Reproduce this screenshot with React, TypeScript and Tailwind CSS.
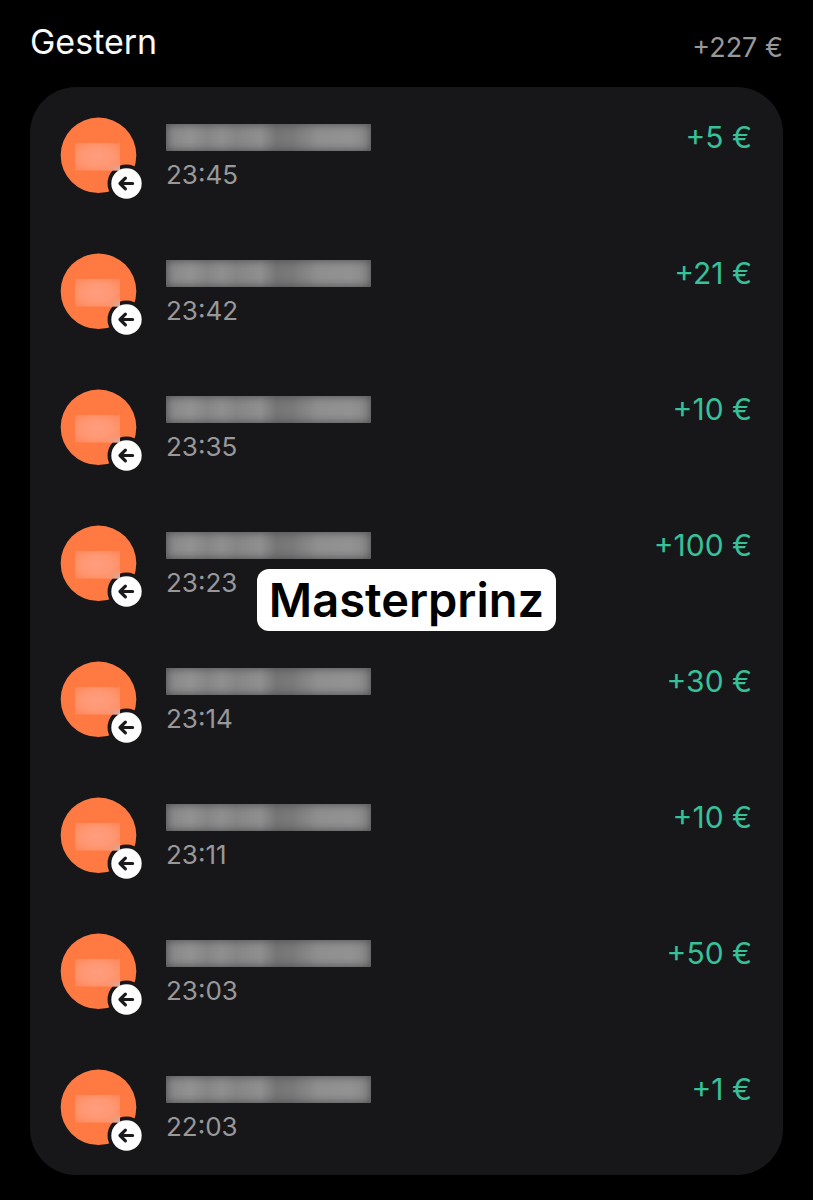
type Transaction = {
  time: string;
  amount: string;
};

const transactions: Transaction[] = [
  { time: '23:45', amount: '+5 €' },
  { time: '23:42', amount: '+21 €' },
  { time: '23:35', amount: '+10 €' },
  { time: '23:23', amount: '+100 €' },
  { time: '23:14', amount: '+30 €' },
  { time: '23:11', amount: '+10 €' },
  { time: '23:03', amount: '+50 €' },
  { time: '22:03', amount: '+1 €' },
];

function Avatar() {
  return (
    <svg
      className="h-[82px] w-[82px] shrink-0"
      viewBox="0 0 82 82"
      fill="none"
      aria-hidden="true"
    >
      <defs>
        <radialGradient id="initials" cx="0.5" cy="0.5" r="0.68">
          <stop offset="0" stopColor="#ff9d7e" />
          <stop offset="0.5" stopColor="#ff9874" />
          <stop offset="1" stopColor="#ff875a" />
        </radialGradient>
        <radialGradient id="corner" cx="1" cy="1" r="0.4">
          <stop offset="0" stopColor="#c9b4b6" />
          <stop offset="0.4" stopColor="#dfa594" stopOpacity="0.6" />
          <stop offset="1" stopColor="#ff9670" stopOpacity="0" />
        </radialGradient>
      </defs>
      <circle cx="38.5" cy="38.3" r="37.8" fill="#ff7a43" />
      <circle cx="66.5" cy="66.5" r="19" fill="#171719" />
      <rect x="15" y="26" width="45" height="27.5" fill="url(#initials)" />
      <rect x="15" y="26" width="45" height="27.5" fill="url(#corner)" />
      <circle cx="66.5" cy="66.5" r="15.2" fill="#ffffff" />
      <path
        d="M72.6 66.5H60.5M65.4 61.1L60 66.5L65.4 71.9"
        stroke="#1b1b1d"
        strokeWidth="3.2"
        strokeLinecap="round"
        strokeLinejoin="round"
      />
    </svg>
  );
}

function HiddenName() {
  return (
    <div className="h-[27px] w-[205px] bg-[linear-gradient(90deg,#868687_0%,#929293_12%,#868687_20%,#8f8f90_27%,#868687_34%,#8f8f90_46%,#757576_54%,#7a7a7b_62%,#8f8f90_74%,#929293_90%,#868687_100%)] shadow-[inset_0_0_10px_#48484a]" />
  );
}

function TransactionRow({ time, amount }: Transaction) {
  return (
    <li className="flex h-[136px] items-start pt-[30px] pr-[31px] pl-[30px]">
      <Avatar />
      <div className="ml-6 pt-[7px]">
        <HiddenName />
        <time className="mt-2 block text-[26px] leading-8 text-[#98989b]">{time}</time>
      </div>
      <span className="ml-auto text-[30px] leading-10 whitespace-nowrap text-[#36c199]">
        {amount}
      </span>
    </li>
  );
}

export default function App() {
  return (
    <main className="relative min-h-screen bg-black px-[30px] pb-6 font-['Inter',sans-serif]">
      <header className="flex h-[87px] items-start justify-between">
        <h1 className="pt-[22px] text-[34px] leading-10 text-[#fafafa]">Gestern</h1>
        <p className="pt-7 text-[27px] leading-10 text-[#98989b]">+227 €</p>
      </header>
      <ul className="rounded-[46px] bg-[#171719]">
        {transactions.map((transaction) => (
          <TransactionRow key={transaction.time} {...transaction} />
        ))}
      </ul>
      <div className="pointer-events-none absolute inset-0 flex items-center justify-center">
        <strong className="rounded-xl bg-white px-3 text-[47px] leading-[62px] font-semibold text-black">
          Masterprinz
        </strong>
      </div>
    </main>
  );
}
